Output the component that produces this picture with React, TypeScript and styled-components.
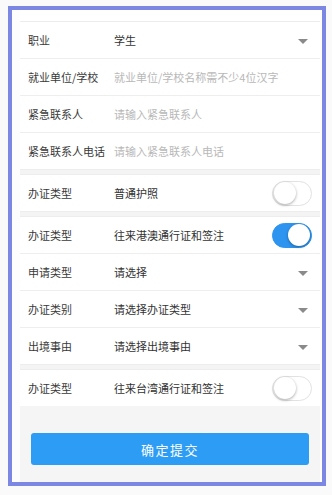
import styled, { createGlobalStyle } from "styled-components";

const GlobalStyle = createGlobalStyle`
  html, body {
    margin: 0;
    padding: 0;
    background: #fafafb;
    font-family: "Noto Sans CJK SC", "Noto Sans", sans-serif;
  }
`;

const Frame = styled.div`
  box-sizing: border-box;
  width: 318px;
  height: 480px;
  margin: 6px 0 0 8px;
  border: 4px solid #7c86e3;
  background: #fdfdfd;
  display: flex;
  flex-direction: column;
  padding: 0 2px 0 8px;
`;

const Content = styled.div`
  flex: 1;
  display: flex;
  flex-direction: column;
  background: #f5f5f5;
`;

const TopSpacer = styled.div`
  height: 11px;
  background: #fff;
  border-bottom: 1px solid #ececec;
`;

const Group = styled.div`
  background: #fff;
`;

const Gap = styled.div`
  box-sizing: border-box;
  height: 6px;
  background: #f4f4f4;
  border-top: 1px solid #ededed;
  border-bottom: 1px solid #ededed;
`;

const Row = styled.div<{ $switch?: boolean }>`
  box-sizing: border-box;
  height: 37px;
  display: flex;
  align-items: center;
  padding: 0 ${(p) => (p.$switch ? "8px" : "12px")} 0 8px;
  border-bottom: 1px solid #eeeeee;

  &:last-child {
    height: 36px;
    border-bottom: none;
  }
`;

const Label = styled.span`
  width: 86px;
  flex-shrink: 0;
  font-size: 11px;
  color: #3a3a3a;
  white-space: nowrap;
`;

const Value = styled.span`
  flex: 1;
  font-size: 11px;
  color: #333;
  white-space: nowrap;
`;

const Field = styled.input`
  flex: 1;
  min-width: 0;
  border: none;
  outline: none;
  padding: 0;
  background: transparent;
  font-family: inherit;
  font-size: 11px;
  color: #333;

  &::placeholder {
    color: #b8b8b8;
  }
`;

const Arrow = styled.span`
  width: 0;
  height: 0;
  margin-top: 3px;
  border-left: 5px solid transparent;
  border-right: 5px solid transparent;
  border-top: 5px solid #8a8a8a;
`;

const Track = styled.span<{ $on?: boolean }>`
  box-sizing: border-box;
  width: 40px;
  height: 25px;
  border-radius: 13px;
  display: flex;
  align-items: center;
  justify-content: ${(p) => (p.$on ? "flex-end" : "flex-start")};
  padding: 0 1px;
  background: ${(p) => (p.$on ? "#2d94ef" : "#fff")};
  border: 1px solid ${(p) => (p.$on ? "#2d94ef" : "#e2e2e2")};
`;

const Knob = styled.span`
  width: 22px;
  height: 22px;
  border-radius: 50%;
  background: #fff;
  box-shadow: 0 1px 3px rgba(0, 0, 0, 0.35);
`;

const Footer = styled.div`
  padding: 27px 11px 0;
`;

const SubmitButton = styled.button`
  width: 100%;
  height: 32px;
  border: none;
  border-radius: 3px;
  background: #2d9cf4;
  color: #fff;
  font-family: inherit;
  font-size: 13px;
  letter-spacing: 1.5px;
  cursor: pointer;
`;

function Switch({ on }: { on?: boolean }) {
  return (
    <Track $on={on}>
      <Knob />
    </Track>
  );
}

function SelectRow({ label, value }: { label: string; value: string }) {
  return (
    <Row>
      <Label>{label}</Label>
      <Value>{value}</Value>
      <Arrow />
    </Row>
  );
}

function InputRow({ label, placeholder }: { label: string; placeholder: string }) {
  return (
    <Row>
      <Label>{label}</Label>
      <Field placeholder={placeholder} />
    </Row>
  );
}

function SwitchRow({ value, on }: { value: string; on?: boolean }) {
  return (
    <Row $switch>
      <Label>办证类型</Label>
      <Value>{value}</Value>
      <Switch on={on} />
    </Row>
  );
}

export default function App() {
  return (
    <>
      <GlobalStyle />
      <Frame>
        <Content>
          <TopSpacer />
          <Group>
            <SelectRow label="职业" value="学生" />
            <InputRow label="就业单位/学校" placeholder="就业单位/学校名称需不少4位汉字" />
            <InputRow label="紧急联系人" placeholder="请输入紧急联系人" />
            <InputRow label="紧急联系人电话" placeholder="请输入紧急联系人电话" />
          </Group>
          <Gap />
          <Group>
            <SwitchRow value="普通护照" />
          </Group>
          <Gap />
          <Group>
            <SwitchRow value="往来港澳通行证和签注" on />
            <SelectRow label="申请类型" value="请选择" />
            <SelectRow label="办证类别" value="请选择办证类型" />
            <SelectRow label="出境事由" value="请选择出境事由" />
          </Group>
          <Gap />
          <Group>
            <SwitchRow value="往来台湾通行证和签注" />
          </Group>
          <Footer>
            <SubmitButton>确定提交</SubmitButton>
          </Footer>
        </Content>
      </Frame>
    </>
  );
}
